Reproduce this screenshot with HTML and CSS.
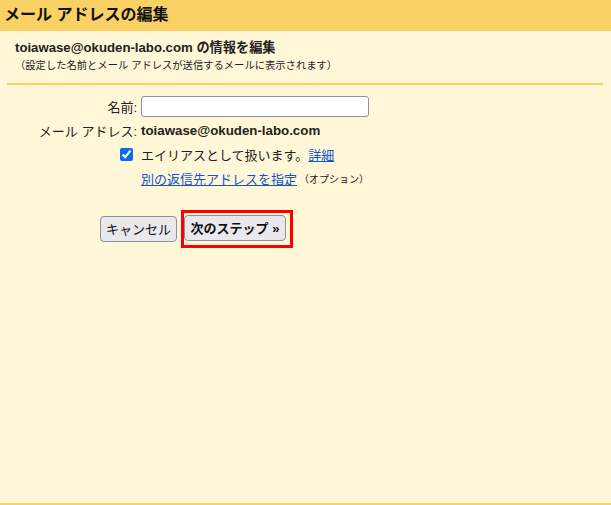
FILE: index.html
```html
<!DOCTYPE html>
<html lang="ja">
<head>
<meta charset="utf-8">
<title>メール アドレスの編集</title>
<link rel="stylesheet" href="styles.css">
</head>
<body>
<div class="page">
  <header class="hdr">メール アドレスの編集</header>
  <div class="info">
    <div class="info-title">toiawase@okuden-labo.com の情報を編集</div>
    <div class="info-note">（設定した名前とメール アドレスが送信するメールに表示されます）</div>
  </div>
  <div class="sep"></div>
  <div class="form">
    <div class="lbl">名前:</div>
    <div class="val"><input class="inp" type="text"></div>
    <div class="lbl">メール アドレス:</div>
    <div class="val addr">toiawase@okuden-labo.com</div>
    <div class="lbl"><input class="chk" type="checkbox" checked></div>
    <div class="val">エイリアスとして扱います。<a class="lnk" href="#">詳細</a></div>
    <div class="lbl"></div>
    <div class="val"><a class="lnk" href="#">別の返信先アドレスを指定</a><span class="opt">（オプション）</span></div>
  </div>
  <div class="btns">
    <button class="btn">キャンセル</button>
    <span class="hl"><button class="btn btn-b">次のステップ »</button></span>
  </div>
</div>
</body>
</html>
```

FILE: styles.css
```css
html, body {
  margin: 0;
  padding: 0;
}
body {
  background: #fff7d7;
  font-family: "Liberation Sans", "Noto Sans CJK JP", sans-serif;
  color: #222;
}
.page {
  min-height: 100vh;
  box-sizing: border-box;
  border-bottom: 2px solid #fad165;
}
.hdr {
  background: #fad165;
  height: 31px;
  line-height: 30px;
  padding-left: 4px;
  font-size: 16px;
  font-weight: bold;
  color: #111;
}
.info {
  padding: 9px 0 0 15px;
}
.info-title {
  font-size: 13.2px;
  font-weight: bold;
  line-height: 16px;
}
.info-note {
  font-size: 10.3px;
  line-height: 14px;
  margin-top: 3px;
}
.sep {
  height: 2px;
  background: #fad165;
  margin: 10px 8px 0 7px;
}
.form {
  display: grid;
  grid-template-columns: 137px 1fr;
  grid-auto-rows: 24px;
  column-gap: 4px;
  margin-top: 9.5px;
  font-size: 13px;
}
.lbl {
  display: flex;
  align-items: center;
  justify-content: flex-end;
}
.val {
  display: flex;
  align-items: center;
}
.inp {
  width: 228px;
  height: 21px;
  box-sizing: border-box;
  margin: 0;
  border: 1px solid #8f8f9d;
  border-radius: 3px;
  background: #fff;
  padding: 1px 3px;
  font-size: 13px;
}
.addr {
  font-weight: bold;
  font-size: 13.3px;
}
.chk {
  width: 13px;
  height: 13px;
  margin: 0 4px 0 0;
  accent-color: #0b6cf0;
}
.lnk {
  color: #1155cc;
  text-decoration: underline;
}
.opt {
  font-size: 10px;
  margin-left: 2px;
}
.btns {
  display: flex;
  align-items: center;
  gap: 4px;
  padding-left: 100px;
  margin-top: 19px;
}
.btn {
  height: 26px;
  margin: 0;
  padding: 0 5px;
  background: #e9e9ed;
  border: 1px solid #8f8f9d;
  border-radius: 4px;
  font-family: "Liberation Sans", "Noto Sans CJK JP", sans-serif;
  font-size: 13px;
  color: #111;
}
.btn-b {
  font-weight: bold;
  width: 102px;
}
.hl {
  display: inline-flex;
  border: 3px solid #ff0000;
  padding: 2px 4px 4px 0;
}
```
